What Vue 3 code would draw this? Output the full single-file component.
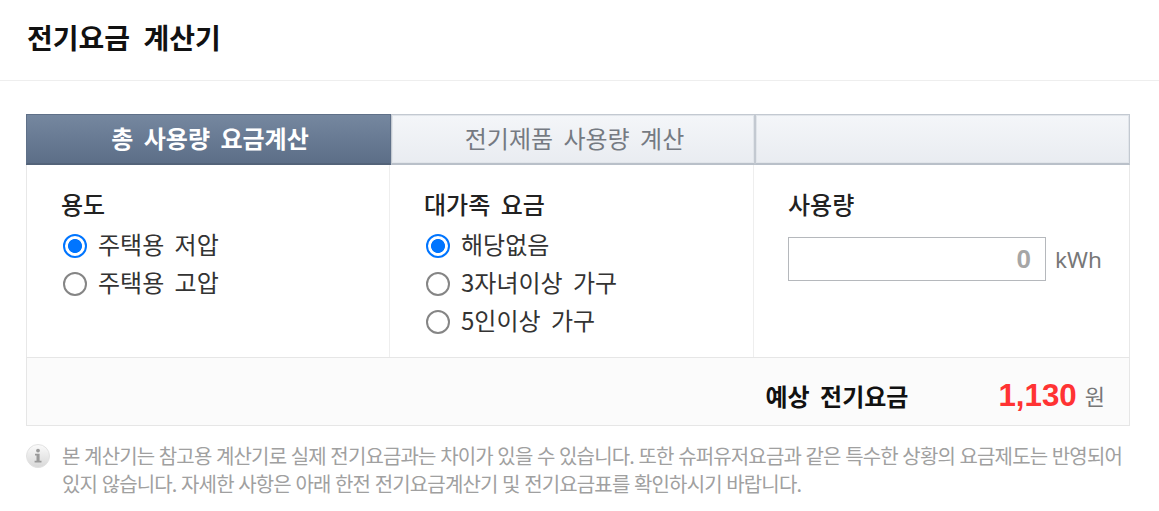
<template>
  <div class="page">
    <h1 class="title">전기요금 계산기</h1>

    <div class="calc">
      <div class="tabs">
        <div
          v-for="(tab, i) in tabs"
          :key="i"
          class="tab"
          :class="{ active: i === 0 }"
        >{{ tab }}</div>
      </div>

      <div class="form">
        <div class="col">
          <div class="label">용도</div>
          <label v-for="opt in useTypes" :key="opt" class="radio">
            <input type="radio" name="use" :value="opt" v-model="useType" />
            <span>{{ opt }}</span>
          </label>
        </div>
        <div class="col">
          <div class="label">대가족 요금</div>
          <label v-for="opt in familyTypes" :key="opt" class="radio">
            <input type="radio" name="family" :value="opt" v-model="familyType" />
            <span>{{ opt }}</span>
          </label>
        </div>
        <div class="col last">
          <div class="label">사용량</div>
          <div class="usage">
            <input class="usage-input" type="text" v-model="usage" />
            <span class="unit">kWh</span>
          </div>
        </div>
      </div>

      <div class="result">
        <span class="result-label">예상 전기요금</span>
        <span class="result-value">1,130</span>
        <span class="result-unit">원</span>
      </div>
    </div>

    <div class="notice">
      <svg class="info" width="26" height="26" viewBox="0 0 26 26">
        <defs>
          <linearGradient id="infoFill" x1="0" y1="0" x2="0" y2="1">
            <stop offset="0" stop-color="#fbfbfb" />
            <stop offset="1" stop-color="#d8d8d8" />
          </linearGradient>
        </defs>
        <circle cx="12" cy="13" r="11.5" fill="url(#infoFill)" stroke="#e2e2e2" />
        <circle cx="12" cy="7.6" r="1.9" fill="#9a9a9a" />
        <path d="M9 10.8h4.6v7h1.9v1.6H8.6v-1.6h1.9v-5.4H9z" fill="#9a9a9a" />
      </svg>
      <p>본 계산기는 참고용 계산기로 실제 전기요금과는 차이가 있을 수 있습니다. 또한 슈퍼유저요금과 같은 특수한 상황의 요금제도는 반영되어 있지 않습니다. 자세한 사항은 아래 한전 전기요금계산기 및 전기요금표를 확인하시기 바랍니다.</p>
    </div>
  </div>
</template>

<script setup>
import { ref } from 'vue'

const tabs = ['총 사용량 요금계산', '전기제품 사용량 계산', '']
const useTypes = ['주택용 저압', '주택용 고압']
const familyTypes = ['해당없음', '3자녀이상 가구', '5인이상 가구']

const useType = ref('주택용 저압')
const familyType = ref('해당없음')
const usage = ref('0')
</script>

<style>
html, body {
  margin: 0;
  background: #fff;
}
</style>

<style scoped>
.page {
  width: 1159px;
  height: 511px;
  overflow: hidden;
  font-family: "Noto Sans CJK KR", "Liberation Sans", sans-serif;
  color: #222;
}

.title {
  margin: 0;
  height: 80px;
  padding-left: 27px;
  border-bottom: 1px solid #eee;
  font-size: 28px;
  font-weight: 700;
  line-height: 75px;
  word-spacing: 7px;
  color: #111;
}

.calc {
  margin: 33px 29px 0 26px;
}

.tabs {
  display: grid;
  grid-template-columns: 365px 364px 375px;
  height: 51px;
}

.tab {
  display: flex;
  align-items: center;
  justify-content: center;
  padding: 0 0 3px 3px;
  border: 1px solid #c3c9d1;
  border-bottom: 2px solid #b9c0c9;
  box-shadow: inset 0 0 0 1px #e1e5ea;
  background: linear-gradient(#f4f6f9, #e9ecf1);
  font-size: 24px;
  word-spacing: 5px;
  color: #757a82;
}

.tab.active {
  border: 1px solid #5f7088;
  border-bottom: 2px solid #536379;
  box-shadow: none;
  background: linear-gradient(#75879f, #5c6e87);
  font-weight: 700;
  color: #fff;
}

.form {
  display: grid;
  grid-template-columns: 363px 364px 376px;
  height: 192px;
  border-left: 1px solid #e8e8e8;
  border-right: 1px solid #e8e8e8;
}

.col {
  padding: 21px 0 0 34px;
  border-right: 1px solid #eee;
}

.col.last {
  border-right: 0;
}

.label {
  height: 35px;
  margin-bottom: 4px;
  font-size: 24px;
  font-weight: 500;
  line-height: 35px;
  word-spacing: 5px;
  color: #222;
}

.radio {
  display: flex;
  align-items: center;
  gap: 11px;
  height: 38px;
  font-size: 24px;
  word-spacing: 5px;
  color: #333;
}

.radio span {
  padding-bottom: 2px;
}

.radio input {
  appearance: none;
  box-sizing: border-box;
  width: 24px;
  height: 24px;
  margin: 4px 0 0 2px;
  border: 2px solid #858585;
  border-radius: 50%;
  background: #fff;
}

.radio input:checked {
  border-color: #0075ff;
  background: radial-gradient(circle, #0075ff 0 6.6px, #fff 7.4px);
}

.usage {
  display: flex;
  align-items: center;
  gap: 9px;
  margin-top: 16px;
}

.usage-input {
  box-sizing: border-box;
  width: 258px;
  height: 44px;
  padding: 0 14px;
  border: 1px solid #b5b8bc;
  outline: 0;
  text-align: right;
  font-family: "Liberation Sans", sans-serif;
  font-size: 26px;
  font-weight: 700;
  color: #a6a6a6;
}

.unit {
  font-family: "Noto Sans", "Liberation Sans", sans-serif;
  font-size: 22.5px;
  color: #777;
}

.result {
  box-sizing: border-box;
  display: flex;
  align-items: center;
  justify-content: flex-end;
  height: 69px;
  padding: 7px 24px 0 0;
  border: 1px solid #e6e6e6;
  background: #fbfbfb;
}

.result-label {
  margin-right: 90px;
  font-size: 24px;
  font-weight: 700;
  word-spacing: 5px;
  color: #111;
}

.result-value {
  margin: 2px 8px 0 0;
  font-family: "Liberation Sans", sans-serif;
  font-size: 31.3px;
  font-weight: 700;
  color: #ff3333;
}

.result-unit {
  font-size: 22px;
  color: #777;
}

.notice {
  display: flex;
  gap: 10px;
  margin: 16px 29px 0 26px;
}

.info {
  flex: none;
  margin-top: 1px;
}

.notice p {
  margin: 0;
  font-size: 20px;
  line-height: 28px;
  letter-spacing: -0.85px;
  word-spacing: 0.9px;
  color: #a0a0a0;
}
</style>
